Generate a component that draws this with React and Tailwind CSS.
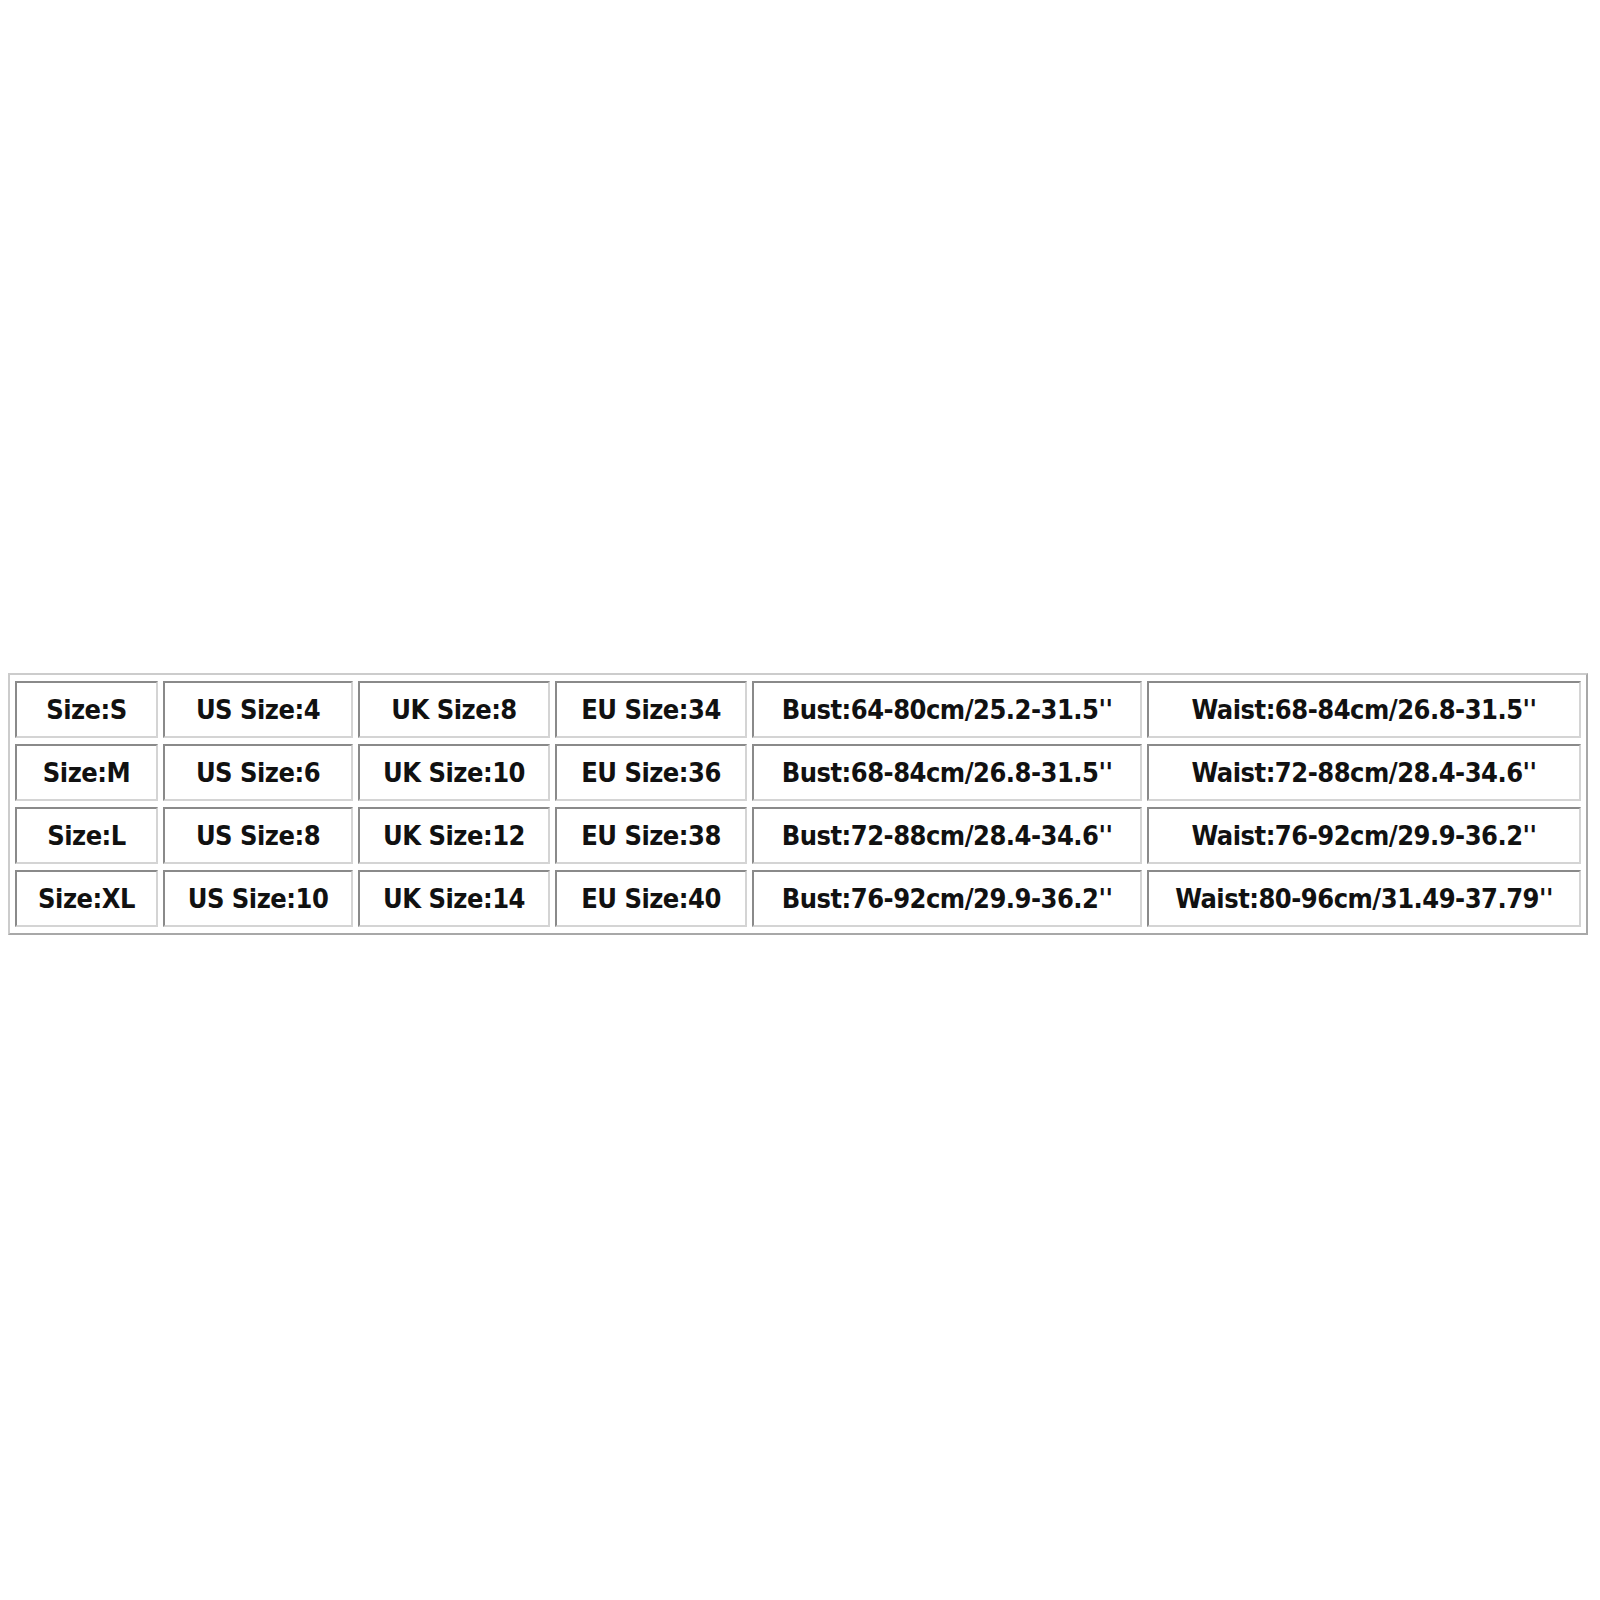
export default function App() {
  const rows = [
    ["Size:S", "US Size:4", "UK Size:8", "EU Size:34", "Bust:64-80cm/25.2-31.5''", "Waist:68-84cm/26.8-31.5''"],
    ["Size:M", "US Size:6", "UK Size:10", "EU Size:36", "Bust:68-84cm/26.8-31.5''", "Waist:72-88cm/28.4-34.6''"],
    ["Size:L", "US Size:8", "UK Size:12", "EU Size:38", "Bust:72-88cm/28.4-34.6''", "Waist:76-92cm/29.9-36.2''"],
    ["Size:XL", "US Size:10", "UK Size:14", "EU Size:40", "Bust:76-92cm/29.9-36.2''", "Waist:80-96cm/31.49-37.79''"],
  ];
  const widths = ["w-[143px]", "w-[190px]", "w-[192px]", "w-[192px]", "w-[390px]", "w-[434px]"];
  return (
    <div className="w-[1600px] h-[1600px] bg-white pt-[673px] pl-[8px]">
      <table className="table-fixed border-separate border-spacing-x-[5px] border-spacing-y-[6px] w-[1580px] border-2 border-t-[#cccccc] border-l-[#cccccc] border-r-[#a8a8a8] border-b-[#a8a8a8] font-['DejaVu_Sans_Condensed','DejaVu_Sans',sans-serif] font-bold text-[27px] tracking-[-0.5px] text-[#111]">
        <tbody>
          {rows.map((r, i) => (
            <tr key={i}>
              {r.map((c, j) => (
                <td
                  key={j}
                  className={`${widths[j]} h-[57px] p-0 text-center align-middle border-2 border-t-[#8a8a8a] border-l-[#8a8a8a] border-r-[#d4d4d4] border-b-[#d4d4d4] leading-none`}
                >
                  {c}
                </td>
              ))}
            </tr>
          ))}
        </tbody>
      </table>
    </div>
  );
}
